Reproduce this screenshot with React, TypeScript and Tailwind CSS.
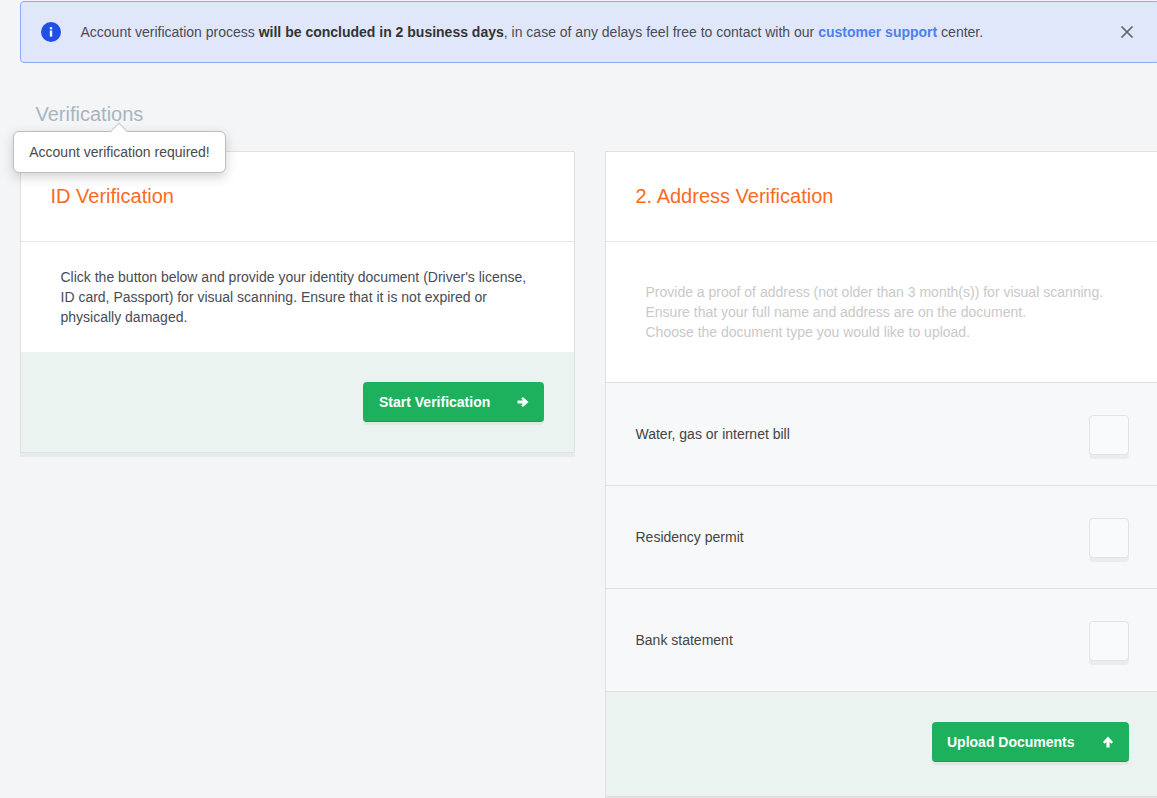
import React from "react";

function ArrowRight() {
  return (
    <svg width="12" height="12" viewBox="0 0 12 12" className="block">
      <path d="M0.5 4.4H6L4.3 2.6 6 1 11.5 6 6 11 4.3 9.4 6 7.6H0.5Z" fill="#fff" />
    </svg>
  );
}

function ArrowUp() {
  return (
    <svg width="12" height="12" viewBox="0 0 12 12" className="block">
      <path d="M4.4 11.5V6L2.6 7.7 1 6 6 0.5 11 6 9.4 7.7 7.6 6V11.5Z" fill="#fff" />
    </svg>
  );
}

function GreenButton({ label, icon, width }: { label: string; icon: React.ReactNode; width: string }) {
  return (
    <button className={`flex h-10 items-center justify-between rounded-[4px] border-b border-[#1a9c55] bg-[#1eb15d] pr-[15px] text-[14px] font-bold text-white shadow-[0_3px_0_#dfe8e5] ${width}`}>
      <span className="translate-y-px">{label}</span>
      {icon}
    </button>
  );
}

function OptionRow({ label }: { label: string }) {
  return (
    <div className="flex h-[103px] items-center justify-between border-b border-[#e0e0e0] bg-[#f7f8fa] pl-[29.5px] pr-[30px]">
      <span className="text-[14px] text-[#444444]">{label}</span>
      <div className="mt-0.5 h-10 w-10 rounded-[4px] border border-[#e2e3e5] bg-[#f9fafc] shadow-[0_4px_0_#ebecee]" />
    </div>
  );
}

export default function App() {
  return (
    <div className="h-[798px] w-[1157px] overflow-hidden bg-[#f4f5f7] font-['Liberation_Sans',Arial,sans-serif]">
      <div className="relative w-[1160px] pl-5 pt-px">
        <div className="flex h-[62px] items-center justify-between rounded-[4px] border border-[#8fa9f7] bg-[#e1e7fb] pl-5 pr-[25px]">
          <div className="flex items-center">
            <svg width="20" height="20" viewBox="0 0 20 20" className="block">
              <circle cx="10" cy="10" r="10" fill="#1f4fe6" />
              <rect x="8.8" y="8.6" width="2.4" height="6" fill="#fff" />
              <rect x="8.8" y="5.2" width="2.4" height="2.2" fill="#fff" />
            </svg>
            <p className="ml-[19.5px] text-[14px] text-[#484b55]">
              Account verification process <strong className="font-bold text-[#333]">will be concluded in 2 business days</strong>, in case of any delays feel free to contact with our <span className="font-bold text-[#4d7fec]">customer support</span> center.
            </p>
          </div>
          <svg width="14" height="14" viewBox="0 0 14 14" className="block">
            <path d="M1.5 1.5l11 11M12.5 1.5l-11 11" stroke="#5f6268" strokeWidth="1.7" fill="none" />
          </svg>
        </div>

        <h1 className="mt-[37px] ml-[15.5px] text-[20px] leading-[28px] font-normal text-[#a9b4c2]">Verifications</h1>

        <div className="absolute left-[13px] top-[131px] z-10 flex h-[42px] w-[213px] items-center justify-center rounded-[6px] border border-[#bdbdbd] bg-white text-[14px] text-[#4a4a4a] shadow-[0_4px_12px_rgba(0,0,0,0.18)]">
          Account verification required!
          <span className="absolute -top-[7px] left-[99px] h-3 w-3 rotate-45 border-l border-t border-[#c9c9c9] bg-white" />
        </div>

        <div className="mt-[23px] flex items-start gap-[30px]">
          <section className="w-[555px] border border-[#e0e0e0] bg-white shadow-[0_4px_0_#e9eaec]">
            <header className="flex h-[90px] items-center border-b border-[#e6e6e6] pb-0.5 pl-[29.5px] text-[20px] text-[#fd6a1e]">ID Verification</header>
            <p className="h-[110px] px-[39.5px] pt-[25px] text-[14px] leading-[20px] text-[#484b55]">
              Click the button below and provide your identity document (Driver's license, ID card, Passport) for visual scanning. Ensure that it is not expired or physically damaged.
            </p>
            <div className="flex h-[100px] items-center justify-end bg-[#ebf3f0] pr-[30px]">
              <GreenButton label="Start Verification" icon={<ArrowRight />} width="w-[181px] pl-4" />
            </div>
          </section>

          <section className="w-[555px] border border-[#e0e0e0] bg-white">
            <header className="flex h-[90px] items-center border-b border-[#e6e6e6] pb-0.5 pl-[29.5px] text-[20px] text-[#fd6a1e]">2. Address Verification</header>
            <p className="h-[141px] border-b border-[#e0e0e0] px-[39.5px] pt-10 text-[14px] leading-[20px] text-[#c9c9c9]">
              Provide a proof of address (not older than 3 month(s)) for visual scanning.<br />
              Ensure that your full name and address are on the document.<br />
              Choose the document type you would like to upload.
            </p>
            <OptionRow label="Water, gas or internet bill" />
            <OptionRow label="Residency permit" />
            <OptionRow label="Bank statement" />
            <div className="flex h-[105px] items-center justify-end border-b border-[#e0e0e0] bg-[#ebf3f0] pb-1 pr-[30px]">
              <GreenButton label="Upload Documents" icon={<ArrowUp />} width="w-[197px] pl-[15px]" />
            </div>
          </section>
        </div>
      </div>
    </div>
  );
}
